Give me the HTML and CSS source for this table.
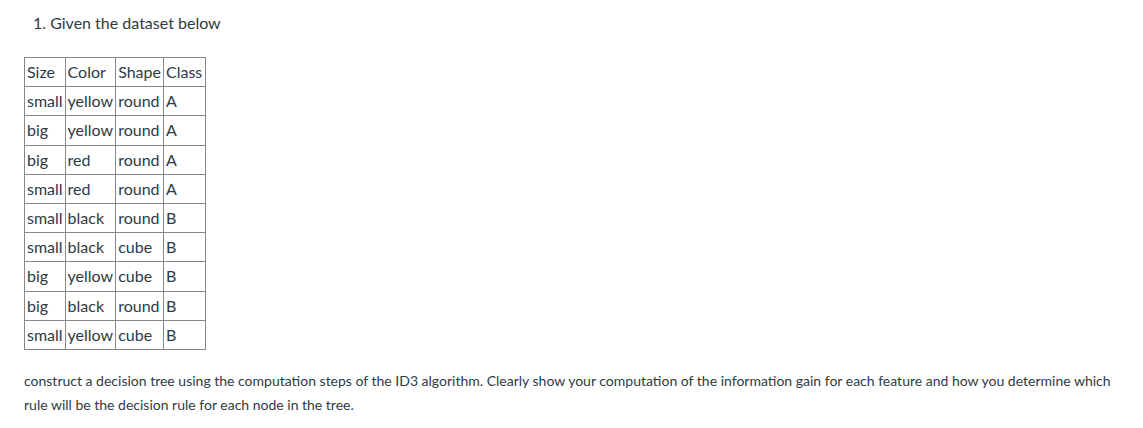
FILE: index.html
```html
<!DOCTYPE html>
<html>
<head>
<meta charset="utf-8">
<link rel="stylesheet" href="styles.css">
</head>
<body>
<div class="question">
  <p class="title">1. Given the dataset below</p>
  <table class="data">
    <tr><td>Size</td><td>Color</td><td>Shape</td><td>Class</td></tr>
    <tr><td>small</td><td>yellow</td><td>round</td><td>A</td></tr>
    <tr><td>big</td><td>yellow</td><td>round</td><td>A</td></tr>
    <tr><td>big</td><td>red</td><td>round</td><td>A</td></tr>
    <tr><td>small</td><td>red</td><td>round</td><td>A</td></tr>
    <tr><td>small</td><td>black</td><td>round</td><td>B</td></tr>
    <tr><td>small</td><td>black</td><td>cube</td><td>B</td></tr>
    <tr><td>big</td><td>yellow</td><td>cube</td><td>B</td></tr>
    <tr><td>big</td><td>black</td><td>round</td><td>B</td></tr>
    <tr><td>small</td><td>yellow</td><td>cube</td><td>B</td></tr>
  </table>
  <p class="body">construct a decision tree using the computation steps of the ID3 algorithm. Clearly show your computation of the information gain for each feature and how you determine which rule will be the decision rule for each node in the tree.</p>
</div>
</body>
</html>
```

FILE: styles.css
```css
html, body {
  margin: 0;
  padding: 0;
  background: #ffffff;
}
body {
  font-family: Lato, "Open Sans", sans-serif;
  color: #2d3b45;
}
.question {
  padding: 12px 24px 0 24px;
  width: 1095px;
}
.title {
  margin: 0 0 24px 9px;
  font-size: 16px;
  line-height: 21px;
}
.data {
  border-collapse: collapse;
  border: 1px solid #333;
  font-size: 16px;
  line-height: 20.2px;
}
.data td {
  border: 1px solid #888;
  padding: 4px 2px 4px 2px;
  white-space: nowrap;
}
.data td:last-child {
  padding-right: 3px;
}
.body {
  margin: 19px 0 0 0;
  font-size: 14px;
  line-height: 24px;
}
```
